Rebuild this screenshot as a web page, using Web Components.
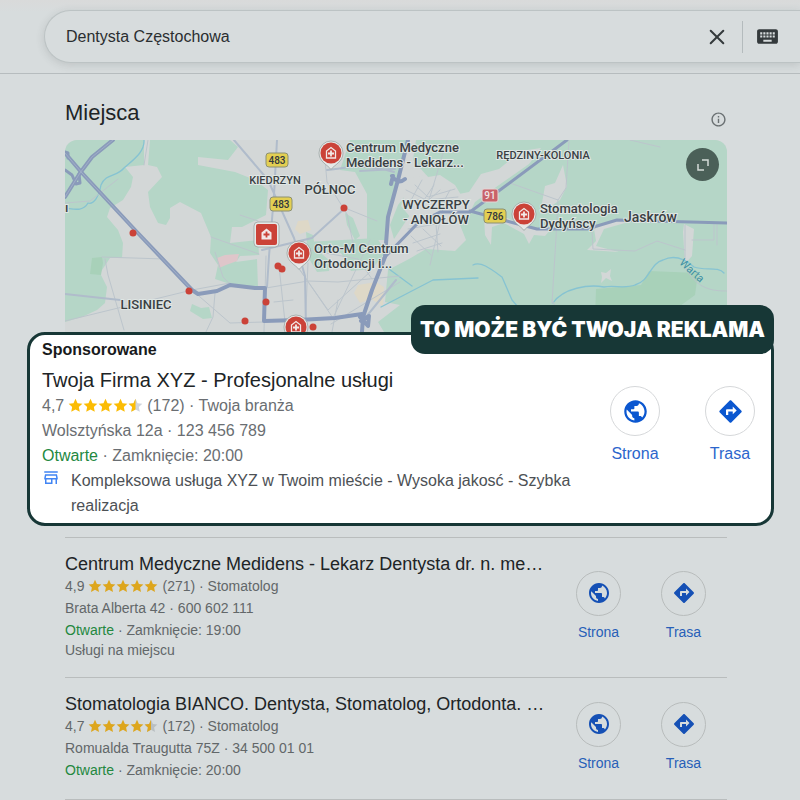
<!DOCTYPE html>
<html lang="pl">
<head>
<meta charset="UTF-8">
<meta name="viewport" content="width=device-width, initial-scale=1.0">
<title>Dentysta Częstochowa</title>
<style>
  body {
    margin: 0;
    background: #d7dcdd;
    color: #202426;
    font-family: "Liberation Sans", Arial, sans-serif;
  }

  main {
    padding: 24px 73px 0 65px;
  }
</style>
</head>
<body>
  <search-header query="Dentysta Częstochowa"></search-header>

  <main>
    <section-title>Miejsca</section-title>
    <places-map></places-map>

    <sponsored-frame badge="TO MOŻE BYĆ TWOJA REKLAMA">
      <place-result featured rating="4,7" reviews="172">
        <span slot="name">Twoja Firma XYZ - Profesjonalne usługi</span>
        <span slot="category">Twoja branża</span>
        <span slot="address">Wolsztyńska 12a · 123 456 789</span>
        <span slot="hours">Zamknięcie: 20:00</span>
        <store-note slot="note">Kompleksowa usługa XYZ w Twoim mieście - Wysoka jakosć - Szybka realizacja</store-note>
      </place-result>
    </sponsored-frame>

    <place-list>
      <place-result rating="4,9" reviews="271">
        <span slot="name">Centrum Medyczne Medidens - Lekarz Dentysta dr. n. me…</span>
        <span slot="category">Stomatolog</span>
        <span slot="address">Brata Alberta 42 · 600 602 111</span>
        <span slot="hours">Zamknięcie: 19:00</span>
        <span slot="note">Usługi na miejscu</span>
      </place-result>
      <place-result rating="4,7" reviews="172">
        <span slot="name">Stomatologia BIANCO. Dentysta, Stomatolog, Ortodonta. …</span>
        <span slot="category">Stomatolog</span>
        <span slot="address">Romualda Traugutta 75Z · 34 500 01 01</span>
        <span slot="hours">Zamknięcie: 20:00</span>
      </place-result>
    </place-list>
  </main>

<script>
class SearchHeader extends HTMLElement {
  connectedCallback() {
    this.attachShadow({ mode: 'open' });
    this.shadowRoot.innerHTML = `
      <style>
        * {
          box-sizing: border-box;
        }

        :host {
          display: block;
          padding: 10px 0 10px 44px;
          border-bottom: 1px solid #b6bcbe;
          background: linear-gradient(#d9dada, #d7dcdd 12px);
          overflow: hidden;
        }

        form {
          display: flex;
          align-items: center;
          height: 53px;
          padding: 0 20px 0 21px;
          border: 1px solid #bcc3c4;
          border-right: 0;
          border-radius: 27px 0 0 27px;
          background: #d7dcdd;
          box-shadow: 0 2px 8px rgba(60, 70, 70, 0.16);
        }

        input {
          flex: 1;
          min-width: 0;
          padding: 0;
          border: 0;
          outline: 0;
          background: none;
          color: #2a2e30;
          font: 16px/24px "Liberation Sans", Arial, sans-serif;
        }

        button {
          display: flex;
          padding: 0;
          border: 0;
          background: none;
          color: #343a3c;
        }

        .divider {
          width: 1px;
          height: 32px;
          margin: 0 12px 0 13px;
          background: #b4bbbd;
        }
      </style>

      <form role="search">
        <input type="text" aria-label="Szukaj" value="${this.getAttribute('query')}">
        <button type="button" aria-label="Wyczyść">
          <svg width="24" height="24" viewBox="0 0 24 24"><path d="M5.7 5.7l12.6 12.6M18.3 5.7L5.7 18.3" stroke="currentColor" stroke-width="2" stroke-linecap="round"/></svg>
        </button>
        <span class="divider"></span>
        <button type="button" aria-label="Klawiatura">
          <svg width="25" height="25" viewBox="0 0 24 24" fill="currentColor"><path d="M20 5H4c-1.1 0-1.99.9-1.99 2L2 17c0 1.1.9 2 2 2h16c1.1 0 2-.9 2-2V7c0-1.1-.9-2-2-2zm-9 3h2v2h-2V8zm0 3h2v2h-2v-2zM8 8h2v2H8V8zm0 3h2v2H8v-2zm-1 2H5v-2h2v2zm0-3H5V8h2v2zm9 7H8v-2h8v2zm0-4h-2v-2h2v2zm0-3h-2V8h2v2zm3 3h-2v-2h2v2zm0-3h-2V8h2v2z"/></svg>
        </button>
      </form>
    `;
  }
}

class SectionTitle extends HTMLElement {
  connectedCallback() {
    this.attachShadow({ mode: 'open' });
    this.shadowRoot.innerHTML = `
      <style>
        :host {
          display: flex;
          align-items: flex-end;
          justify-content: space-between;
          margin-bottom: 12px;
        }

        h2 {
          margin: 0;
          font-size: 22px;
          font-weight: 400;
          line-height: 30px;
        }

        button {
          display: flex;
          padding: 0;
          border: 0;
          background: none;
          color: #6a7072;
        }
      </style>

      <h2><slot></slot></h2>
      <button type="button" aria-label="Informacje">
        <svg width="17" height="17" viewBox="0 0 24 24" fill="currentColor"><path d="M11 7h2v2h-2zm0 4h2v6h-2zm1-9C6.480 2 2 6.480 2 12s4.480 10 10 10 10-4.480 10-10S17.520 2 12 2zm0 18c-4.410 0-8-3.590-8-8s3.590-8 8-8 8 3.590 8 8-3.590 8-8 8z"/></svg>
      </button>
    `;
  }
}

class PlacesMap extends HTMLElement {
  connectedCallback() {
    this.attachShadow({ mode: 'open' });
    this.shadowRoot.innerHTML = `
      <style>
        :host {
          display: block;
          position: relative;
          height: 192px;
          border-radius: 12px 12px 0 0;
          overflow: hidden;
        }

        .map {
          display: block;
          width: 100%;
          height: 100%;
          font-family: Roboto, sans-serif;
        }

        .green { fill: #b5d6c7; }
        .land { fill: #d3d7d7; }
        .wood { fill: #a8d1b9; }

        .street, .road, .main, .river {
          fill: none;
          stroke-linejoin: round;
          stroke-linecap: round;
        }

        .street { stroke: #bcc5cc; stroke-width: 1; }
        .road { stroke: #b0bccb; stroke-width: 2; }
        .main { stroke: #8a9bba; stroke-width: 4; }
        .river { stroke: #86c3d2; stroke-width: 1.300; }

        .label {
          fill: #3a4043;
          font-size: 13px;
          font-weight: 500;
          stroke: #dfe6e4;
          stroke-width: 2px;
          paint-order: stroke;
        }

        .district { font-size: 13px; text-anchor: middle; }
        .minor { font-size: 11px; text-anchor: middle; }
        .town { font-size: 14px; }

        .shield {
          font-size: 10px;
          font-weight: 500;
          text-anchor: middle;
          fill: #33393c;
        }

        .water { fill: #3c8fa3; font-size: 11px; }
        .dot { fill: #cb4238; }

        button {
          position: absolute;
          top: 8px;
          right: 8px;
          display: flex;
          align-items: center;
          justify-content: center;
          width: 33px;
          height: 33px;
          padding: 0;
          border: 0;
          border-radius: 50%;
          background: #4b6058;
        }
      </style>

      <svg class="map" viewBox="65 140 662 192" preserveAspectRatio="xMidYMin slice" role="img" aria-label="Mapa">
        <defs>
          <g id="clinic">
            <path d="M-4.500 5V-2L0-5.500 4.500-2V5z" fill="none" stroke="#f2e9e8" stroke-width="1.300"/>
            <path d="M0-2.500v6M-3 .5h6" stroke="#f2e9e8" stroke-width="1.800"/>
          </g>
          <g id="pin">
            <path d="M0 16.500C-3 12-12 9-12 0a12 12 0 0 1 24 0C12 9 3 12 0 16.500z" fill="#e6e8e7" stroke="#9ba5a3" stroke-width=".8"/>
            <circle r="10.500" fill="#cb4238"/>
            <use href="#clinic"/>
          </g>
        </defs>

        <!-- terrain -->
        <rect class="land" x="65" y="140" width="662" height="192"/>
        <path class="green" d="M65 140H144V165L125 167 133 177 131 187 123 200 110 208 107 217 118 230 123 243 122 258 110 258 100 273 107 287 105 303 97 310 82 317 65 322z"/>
        <path class="green" d="M150 140H230L238 147 228 160 198 157 198 165 235 172 255 180 268 190 266 215 242 227 232 227 230 243 258 240 259 255 240 256 236 262 257 259 258 288 230 284 215 279 218 265 210 253 211 237 201 213 180 202 170 208 170 218 166 225 158 223 150 207 148 192 162 177 157 167 148 165z"/>
        <path d="M217 258l8-3 14-1-2 7-11 4-7 3z" fill="#dfc6ca"/>
        <path class="wood" d="M92 258l10-1 1 6-2 12-11-1z"/>
        <path class="green" d="M192 304l9 4 8-1 3 11-9 1-13-8z"/>
        <path class="green" d="M350 140H408L398 180 389 214 386 240H367V194L355 172 340 170z"/>
        <path class="green" d="M307 242l70-4 9 14-14 17-21 2-10-18-30-2zM306 232l7 3 2 13 15 13-1 10-12 1-9-15zM345 213l8 5 7 18-5 4-8-15z"/>
        <path class="green" d="M416 140H727V332H384L378 322 400 305 385 302 388 270 409 259 426 249 455 251 466 240 460 225 470 210 455 185 440 175 428 177 413 160z"/>
        <path class="green" d="M398 205l10-13 10 8-6 12-18 27-4-14z"/>
        <path class="wood" d="M596 289l45-4 8-14 49 2-3 22-15 11-20 10-65 4z"/>
        <path class="land" d="M410 178l16-3 18 22 25-5 12-18 18-5 22-18 20-3-12 16-30 21-24 17-6 12-25-4-28 14-15-18z"/>
        <path class="land" d="M484 217l23 1 26 11 20-2-8 9-11-1-5 9-5-10-20-11-12 4-1 18-6-10zM594 229l20-9 18 1-28 8-8 17 23 6-32-2 9-9zM684 224l10 5-2 27-7 8-2-32zM545 186l10-3 8-18 4 21-7 14-20 14zM601 272l5 1 5-4-1 7 2 5-6-3-5 5 1-6z"/>
        <path d="M298 221l10-1 3 10-11 4-5-5zM358 285l18-3 8 5-1 19-12-7-11 4-6-10z" fill="#ded8c7"/>

        <!-- water -->
        <path class="river" d="M144 140c1 12-11 20-20 28-7 9-18 5-23 17-2 11-7 20-13 18-5 9-14 6-23 5M389 269l23 17M381 307l52-27 45-2M473 265c8-4 18 4 29 12l10 23 12 14M553 303c10-15 36-19 51-16 10-2 21 2 31-2 15-4 15-22 28-25 12-6 22-1 31 7 11 4 24-1 30 6"/>

        <!-- streets -->
        <path class="street" d="M148 140l-4 25M65 203l25-2 28-22M102 257l62 2M105 259l3 16 16 55M65 321l127-31 38-7M192 290l38 33 34-1M215 293l-2 24-8 17M211 237l48 17M215 252l8 25 8 8M240 215l18 6"/>
        <path class="street" d="M266 288l42-7 30 1 62-6M279 266l6 56M325 160l2 22 20 32 7 34M309 250l49 9 14 20M345 208l32 13M370 240l-37 78-40-58 35 50 42-38M400 282l-69 42M274 302l19-2M266 256l-2 76M308 263l-3 69M338 300l-6 32"/>
        <path class="street" d="M406 190l20 10 32-3M415 185l13 12 27-8M407 201l23-2 10-9M422 180l-12 22M434 185l-12 18M450 190l-6 11M413 243l27-9M417 251l25-8M411 236l20 19M423 229l18 17M436 224l2 28M408 229l28-5"/>
        <path class="street" d="M510 183l48 17 8-12 3-48M558 200l-2 38-4 65M552 300l10 19M592 231l1 18 42 2 22-10 28 9M685 225v34M692 240h22v-16M717 223v22M630 140l30 7M685 267c12 22 26 24 42 24M445 200l-15 65M429 200l18-60M553 314l20-4 40 1"/>
        <path class="road" d="M277 140l-3 55-5 61-2 31M234 140l34 40 26 58 11 38 1 54M262 250l50-12 33-30M360 171l35-2M65 294l55 6M327 170c20-2 35-7 67 2M396 280l-30 37"/>

        <!-- main roads -->
        <path class="main" d="M65 153L82 173 135 230 192 290 198 294 217 291 230 285 255 288 265 288 264 321 298 320 335 318 362 314"/>
        <path class="main" stroke-width="5" d="M65 197L80 173 92 157 113 140"/>
        <path class="main" d="M65 170l7 5 4 9 4-1-1-9M65 152l3 1 0 5" style="stroke-width: 3"/>
        <path class="main" d="M408 140L398 180 388 217 385 257 372 290 363 317 362 332M392 176q6 9 13 3M393 176l-2 8M360 317l8 9 1-10-8 5"/>
        <path class="main" d="M384 258L418 223 440 212H470L500 190 567 140M470 211L503 220 537 229H587L617 220 727 223" style="stroke-width: 3"/>
        <path d="M65 153L82 173 135 230 192 290M65 197L80 173 92 157 113 140" fill="none" stroke="#a0aec8" stroke-width="1"/>

        <!-- road numbers -->
        <g class="shield">
          <rect x="266" y="153" width="22" height="14" rx="3" fill="#e3cf52" stroke="#8c9072"/>
          <text x="277" y="164">483</text>
          <rect x="270" y="197" width="22" height="14" rx="3" fill="#e3cf52" stroke="#8c9072"/>
          <text x="281" y="208">483</text>
          <rect x="484" y="209" width="22" height="14" rx="3" fill="#e3cf52" stroke="#8c9072"/>
          <text x="495" y="220">786</text>
          <rect x="482" y="189" width="16" height="13" rx="2" fill="#c96269" stroke="#e4d5d6"/>
          <text x="490" y="199" style="fill: #f0e6e6">91</text>
        </g>

        <!-- place names -->
        <g class="label">
          <text x="65" y="212">ı</text>
          <text class="minor" x="275" y="184">KIEDRZYN</text>
          <text class="district" x="330" y="194">PÓŁNOC</text>
          <text class="district" x="436" y="209">WYCZERPY</text>
          <text class="district" x="436" y="224">- ANIOŁÓW</text>
          <text class="minor" x="543" y="159">RĘDZINY-KOLONIA</text>
          <text class="district" x="146" y="309">LISINIEC</text>
          <text class="town" x="624" y="222">Jaskrów</text>
        </g>
        <text class="water" transform="rotate(42 680 262)" x="680" y="264">Warta</text>

        <!-- clinics -->
        <g class="dot">
          <circle cx="133" cy="233" r="3.500"/>
          <circle cx="189" cy="291" r="3.500"/>
          <circle cx="278" cy="266" r="3.500"/>
          <circle cx="282" cy="269" r="3.500"/>
          <circle cx="266" cy="302" r="3.500"/>
          <circle cx="245" cy="321" r="3.500"/>
          <circle cx="344" cy="208" r="3.500"/>
          <circle cx="313" cy="327" r="3.500"/>
        </g>
        <rect x="254" y="222" width="25" height="25" rx="4" fill="#e6e8e7" stroke="#9ba5a3" stroke-width=".8"/>
        <rect x="256" y="224" width="21" height="21" rx="2" fill="#cb4238"/>
        <path d="M261.500 239.500v-7l5-4 5 4v7z" fill="#f2e9e8"/>
        <path d="M266.500 231.500v6M263.500 234.500h6" stroke="#cb4238" stroke-width="1.800"/>
        <use href="#pin" x="331" y="153"/>
        <use href="#pin" x="299" y="253"/>
        <use href="#pin" x="524" y="214"/>
        <use href="#pin" x="296" y="327"/>
        <g class="label">
          <text x="346" y="152">Centrum Medyczne</text>
          <text x="346" y="167">Medidens - Lekarz...</text>
          <text x="314" y="253">Orto-M Centrum</text>
          <text x="314" y="268">Ortodoncji i...</text>
          <text x="540" y="213">Stomatologia</text>
          <text x="540" y="228">Dydyńscy</text>
        </g>
      </svg>

      <button type="button" aria-label="Powiększ mapę">
        <svg width="12" height="12" viewBox="0 0 12 12" fill="none" stroke="#d5dbd8" stroke-width="1.500"><path d="M5 1h6v6M1 5v6h6"/></svg>
      </button>
    `;
  }
}

class SponsoredFrame extends HTMLElement {
  connectedCallback() {
    this.attachShadow({ mode: 'open' });
    this.shadowRoot.innerHTML = `
      <style>
        :host {
          display: block;
          position: relative;
          margin: 0 -47px 11px -38px;
          padding: 5px 16px 5px 12px;
          border: 3px solid #173736;
          border-radius: 18px;
          background: #fff;
        }

        .badge {
          position: absolute;
          right: -3px;
          bottom: 100%;
          margin-bottom: -19px;
          padding: 0 9px;
          border-radius: 14px;
          background: #173736;
          color: #fff;
          font: 900 21px/49px Inter, sans-serif;
          white-space: nowrap;
        }
      </style>

      <strong class="badge">${this.getAttribute('badge')}</strong>
      <slot></slot>
    `;
  }
}

class PlaceList extends HTMLElement {
  connectedCallback() {
    this.attachShadow({ mode: 'open' });
    this.shadowRoot.innerHTML = `
      <style>
        :host {
          display: block;
          border-bottom: 1px solid #b9bdbd;
        }

        ::slotted(*) {
          padding: 15px 21px 18px 0;
          border-top: 1px solid #b9bdbd;
        }
      </style>

      <slot></slot>
    `;
  }
}

class StarRating extends HTMLElement {
  connectedCallback() {
    const value = parseFloat(this.getAttribute('value').replace(',', '.'));
    const star = 'M7 .8l1.900 4.100 4.500.5-3.300 3 .9 4.500L7 10.700l-4 2.200.9-4.500-3.300-3 4.500-.5z';
    let stars = '';
    for (let i = 0; i < 5; i++) {
      const half = value < i + 0.8;
      stars += `<g transform="translate(${i * 14})">
        <path d="${star}" fill="${half ? 'var(--star-empty)' : 'var(--star)'}"/>
        ${half ? `<path d="${star}" fill="var(--star)" clip-path="url(#half)"/>` : ''}
      </g>`;
    }

    this.attachShadow({ mode: 'open' });
    this.shadowRoot.innerHTML = `
      <style>
        :host {
          display: inline-flex;
        }

        svg {
          height: var(--star-size);
        }
      </style>

      <svg viewBox="0 0 70 14" aria-hidden="true">
        <clipPath id="half"><rect width="7" height="14"/></clipPath>
        ${stars}
      </svg>
    `;
  }
}

class StoreNote extends HTMLElement {
  connectedCallback() {
    this.attachShadow({ mode: 'open' });
    this.shadowRoot.innerHTML = `
      <style>
        :host {
          display: flex;
          align-items: flex-start;
          gap: 11px;
          color: #4d5155;
        }

        svg {
          flex: none;
        }
      </style>

      <svg width="18" height="20" viewBox="0 0 24 24" fill="#4285f4" aria-hidden="true"><path d="M18.360 9l.6 3H5.040l.6-3h12.720M21 3H3v2h18V3zm-1 4H4l-1 5v2h1v6h10v-6h4v6h2v-6h1v-2l-1-5zM6 18v-4h6v4H6z"/></svg>
      <span><slot></slot></span>
    `;
  }
}

class ActionLink extends HTMLElement {
  connectedCallback() {
    const icons = {
      site: 'M12 2C6.480 2 2 6.480 2 12s4.480 10 10 10 10-4.480 10-10S17.520 2 12 2zm-1 17.930c-3.950-.49-7-3.850-7-7.930 0-.62.08-1.210.21-1.790L9 15v1c0 1.100.9 2 2 2v1.930zm6.900-2.540c-.26-.81-1-1.390-1.900-1.390h-1v-3c0-.55-.45-1-1-1H8v-2h2c.55 0 1-.45 1-1V7h2c1.100 0 2-.9 2-2v-.41c2.930 1.190 5 4.060 5 7.410 0 2.080-.8 3.970-2.100 5.390z',
      route: 'M21.710 11.290l-9-9c-.39-.39-1.020-.39-1.410 0l-9 9c-.39.39-.39 1.020 0 1.410l9 9c.39.39 1.020.39 1.410 0l9-9c.39-.38.39-1.010 0-1.410zM14 14.500V12h-4v3H8v-4c0-.55.45-1 1-1h5V7.500l3.500 3.500-3.500 3.500z'
    };

    this.attachShadow({ mode: 'open' });
    this.shadowRoot.innerHTML = `
      <style>
        :host {
          display: block;
          width: var(--circle);
        }

        a {
          display: flex;
          flex-direction: column;
          align-items: center;
          gap: var(--label-gap);
          color: var(--link);
          text-decoration: none;
          line-height: 20px;
        }

        .circle {
          display: flex;
          align-items: center;
          justify-content: center;
          box-sizing: border-box;
          width: var(--circle);
          height: var(--circle);
          border: 1px solid var(--ring);
          border-radius: 50%;
          color: var(--icon);
        }

        svg {
          width: var(--icon-size);
          height: var(--icon-size);
        }
      </style>

      <a href="#">
        <span class="circle"><svg viewBox="0 0 24 24" fill="currentColor" aria-hidden="true"><path d="${icons[this.getAttribute('icon')]}"/></svg></span>
        <span><slot></slot></span>
      </a>
    `;
  }
}

class PlaceResult extends HTMLElement {
  connectedCallback() {
    const rating = this.getAttribute('rating');

    this.attachShadow({ mode: 'open' });
    this.shadowRoot.innerHTML = `
      <style>
        :host {
          --circle: 45px;
          --label-gap: 6px;
          --icon-size: 24px;
          --star-size: 14px;
          --star: #dda61d;
          --star-empty: #b9bfc2;
          --ring: #b8bcbc;
          --icon: #1550b5;
          --link: #275fb8;
          display: flex;
          align-items: center;
          gap: 24px;
          color: #626769;
          font-size: 14px;
          line-height: 22px;
        }

        :host([featured]) {
          --circle: 50px;
          --label-gap: 8px;
          --icon-size: 27px;
          --star-size: 15px;
          --star: #fbbc04;
          --star-empty: #d0d5dc;
          --ring: #d6d8da;
          --icon: #0b57d0;
          --link: #2c66cc;
          color: #6a6e72;
          font-size: 16px;
          line-height: 25px;
        }

        .info {
          flex: 1;
          min-width: 0;
        }

        .sponsored {
          display: block;
          margin-bottom: 8px;
          color: #181a1c;
          font-size: 16px;
          line-height: 20px;
        }

        h3 {
          margin: 0;
          color: #202426;
          font-size: 18px;
          font-weight: 400;
          white-space: nowrap;
        }

        :host([featured]) h3 {
          font-size: 20px;
        }

        .rating {
          display: flex;
          align-items: center;
          gap: 4px;
        }

        .open {
          color: #23883f;
        }

        :host(:not([featured])) .note {
          line-height: 18px;
        }

        .actions {
          display: flex;
          gap: 40px;
        }

        :host([featured]) .actions {
          gap: 45px;
          padding-bottom: 8px;
        }
      </style>

      <div class="info">
        ${this.hasAttribute('featured') ? '<strong class="sponsored">Sponsorowane</strong>' : ''}
        <h3><slot name="name"></slot></h3>
        <div class="rating">
          <span>${rating}</span>
          <star-rating value="${rating}"></star-rating>
          <span>(${this.getAttribute('reviews')}) · <slot name="category"></slot></span>
        </div>
        <div><slot name="address"></slot></div>
        <div><span class="open">Otwarte</span> · <slot name="hours"></slot></div>
        <div class="note"><slot name="note"></slot></div>
      </div>
      <div class="actions">
        <action-link icon="site">Strona</action-link>
        <action-link icon="route">Trasa</action-link>
      </div>
    `;
  }
}

customElements.define('search-header', SearchHeader);
customElements.define('section-title', SectionTitle);
customElements.define('places-map', PlacesMap);
customElements.define('star-rating', StarRating);
customElements.define('store-note', StoreNote);
customElements.define('action-link', ActionLink);
customElements.define('place-result', PlaceResult);
customElements.define('sponsored-frame', SponsoredFrame);
customElements.define('place-list', PlaceList);
</script>
</body>
</html>
